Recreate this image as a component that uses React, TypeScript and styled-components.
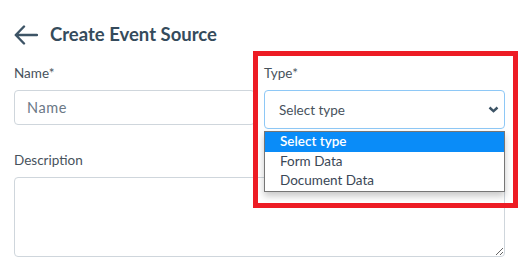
import styled, { createGlobalStyle } from "styled-components";

const GlobalStyle = createGlobalStyle`
    body {
        margin: 0;
        background: #ffffff;
        font-family: Lato, "Noto Sans", sans-serif;
    }
`;

const options = ["Select type", "Form Data", "Document Data"];

export default function App() {
    return (
        <>
            <GlobalStyle />
            <Page>
                <Header>
                    <BackButton aria-label="Back">
                        <svg width="24" height="20" viewBox="0 0 24 20" fill="none">
                            <path
                                d="M10 1.5L1.8 10L10 18.5M1.8 10H23"
                                stroke="#3d5466"
                                strokeWidth="2.4"
                                strokeLinecap="round"
                                strokeLinejoin="round"
                            />
                        </svg>
                    </BackButton>
                    <Title>Create Event Source</Title>
                </Header>

                <Row>
                    <Field>
                        <Label>Name*</Label>
                        <Input placeholder="Name" />
                    </Field>
                    <Field>
                        <Label>Type*</Label>
                        <Select>
                            <span>Select type</span>
                            <svg width="11" height="7" viewBox="0 0 11 7">
                                <path d="M1.5 1.5L5.5 5.2L9.5 1.5" stroke="#3d5466" strokeWidth="2.4" fill="none" />
                            </svg>
                        </Select>
                        <OptionList>
                            {options.map((o, i) => (
                                <OptionItem key={o} $active={i === 0}>
                                    {o}
                                </OptionItem>
                            ))}
                        </OptionList>
                        <Highlight />
                    </Field>
                </Row>

                <Field>
                    <Label>Description</Label>
                    <TextArea />
                </Field>
            </Page>
        </>
    );
}

/* ======= Styled Components ======= */

const Page = styled.div`
    padding: 19px 20px 0 14px;
    width: 491px;
`;

const Header = styled.div`
    display: flex;
    align-items: center;
    gap: 12px;
    height: 30px;
    margin-bottom: 15px;
`;

const BackButton = styled.span`
    display: flex;
    align-items: center;
    width: 24px;
    height: 20px;
    margin-top: 1px;
`;

const Title = styled.h2`
    margin: 0;
    font-size: 18.5px;
    font-weight: 700;
    color: #354b5c;
`;

const Row = styled.div`
    display: grid;
    grid-template-columns: 241px 241px;
    column-gap: 9px;
    margin-bottom: 22px;
`;

const Field = styled.div`
    position: relative;
    display: flex;
    flex-direction: column;
`;

const Label = styled.label`
    font-size: 13.5px;
    color: #47525c;
    line-height: 18px;
    margin-bottom: 8px;
`;

const Input = styled.input`
    box-sizing: border-box;
    height: 35px;
    border: 1px solid #cfd6dc;
    border-radius: 4px;
    padding: 0 12px;
    font-family: Lato, "Noto Sans", sans-serif;
    font-size: 14.5px;
    letter-spacing: 0.6px;
    color: #333;
    outline: none;

    &::placeholder {
        font-family: Lato, "Noto Sans", sans-serif;
        color: #6b7886;
    }
`;

const Select = styled.div`
    box-sizing: border-box;
    height: 39px;
    display: flex;
    align-items: center;
    justify-content: space-between;
    padding: 0 5px 0 14px;
    border: 1px solid #8ec8f6;
    border-radius: 4px;
    font-size: 13.5px;
    color: #47525c;
`;

const OptionList = styled.ul`
    position: absolute;
    top: 67px;
    left: 0;
    right: 0;
    margin: 0;
    padding: 0;
    list-style: none;
    background: #fff;
    border: 1px solid #767676;
    box-shadow: 0 4px 7px rgba(0, 0, 0, 0.22);
    z-index: 2;
`;

const OptionItem = styled.li<{ $active?: boolean }>`
    height: 19.5px;
    line-height: 19.5px;
    padding-left: 15px;
    font-size: 13.5px;
    font-weight: ${(p) => (p.$active ? 600 : 400)};
    background: ${(p) => (p.$active ? "#0a8cf8" : "transparent")};
    color: ${(p) => (p.$active ? "#ffffff" : "#3a4756")};
`;

const Highlight = styled.div`
    position: absolute;
    top: -13px;
    left: -11px;
    width: 265px;
    height: 157px;
    box-sizing: border-box;
    border: 5px solid #ed1c24;
    z-index: 3;
    pointer-events: none;
`;

const TextArea = styled.textarea`
    box-sizing: border-box;
    height: 80px;
    width: 491px;
    border: 1px solid #cfd6dc;
    border-radius: 4px;
    font-family: inherit;
    resize: vertical;
    outline: none;
`;
